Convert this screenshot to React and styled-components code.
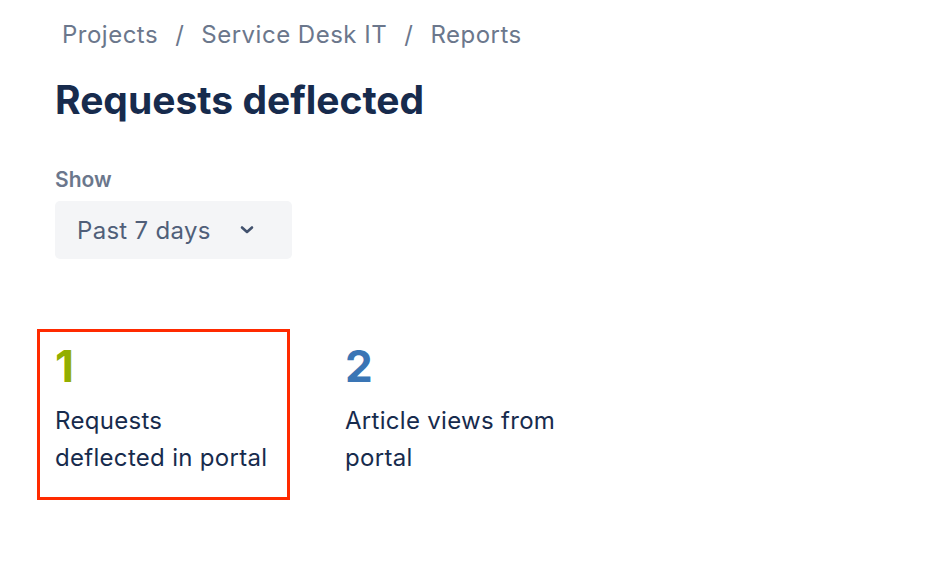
import React from 'react';
import styled, { createGlobalStyle } from 'styled-components';

const GlobalStyle = createGlobalStyle`
  html, body {
    margin: 0;
    padding: 0;
    background: #fff;
    font-family: Inter, "Noto Sans", sans-serif;
  }
`;

const stats = [
  { value: 1, label: 'Requests\ndeflected in portal', color: '#93AE00', selected: true },
  { value: 2, label: 'Article views from\nportal', color: '#3A75B5' },
];

const App = () => (
  <Page>
    <GlobalStyle />
    <Breadcrumbs>
      <Crumb>Projects</Crumb>
      <Sep>/</Sep>
      <Crumb>Service Desk IT</Crumb>
      <Sep>/</Sep>
      <Crumb>Reports</Crumb>
    </Breadcrumbs>
    <Title>Requests deflected</Title>
    <FieldLabel>Show</FieldLabel>
    <Select>
      Past 7 days
      <svg width="14" height="10" viewBox="0 0 14 10">
        <path d="M2 2.5 L7 7 L12 2.5" fill="none" stroke="#42526E" strokeWidth="2.6" strokeLinecap="round" strokeLinejoin="round" />
      </svg>
    </Select>
    <Stats>
      {stats.map((s) => (
        <StatCard key={s.value} $selected={s.selected}>
          <StatValue $color={s.color}>{s.value}</StatValue>
          <StatLabel>{s.label}</StatLabel>
        </StatCard>
      ))}
    </Stats>
  </Page>
);

const Page = styled.div`
  padding: 19px 0 0 55px;
`;

const Breadcrumbs = styled.nav`
  display: flex;
  align-items: center;
  padding-left: 7px;
  font-size: 24px;
  line-height: 32px;
  letter-spacing: 0.5px;
  color: #6B778C;
`;

const Crumb = styled.span``;

const Sep = styled.span`
  margin: 0 17px;
`;

const Title = styled.h1`
  margin: 25px 0 0;
  font-size: 39px;
  font-weight: 700;
  line-height: 48px;
  color: #172B4D;
`;

const FieldLabel = styled.div`
  margin-top: 44px;
  font-size: 21px;
  font-weight: 600;
  line-height: 24px;
  color: #6B778C;
`;

const Select = styled.div`
  margin-top: 9px;
  width: 237px;
  height: 58px;
  box-sizing: border-box;
  padding: 0 38px 0 22px;
  display: flex;
  align-items: center;
  justify-content: space-between;
  background: #F4F5F7;
  border-radius: 5px;
  font-size: 24px;
  letter-spacing: 0.3px;
  color: #505F79;
`;

const Stats = styled.div`
  display: flex;
  margin-top: 70px;
  margin-left: -18px;
`;

const StatCard = styled.div`
  width: 253px;
  height: 171px;
  box-sizing: border-box;
  padding: 8px 15px;
  border: 3px solid ${(p) => (p.$selected ? '#FF2A00' : 'transparent')};
  margin-right: 37px;
`;

const StatValue = styled.div`
  font-size: 44px;
  font-weight: 700;
  line-height: 52px;
  color: ${(p) => p.$color};
`;

const StatLabel = styled.div`
  margin-top: 10px;
  width: 240px;
  white-space: pre-line;
  font-size: 24px;
  line-height: 37px;
  letter-spacing: 0.3px;
  color: #172B4D;
`;

export default App;
